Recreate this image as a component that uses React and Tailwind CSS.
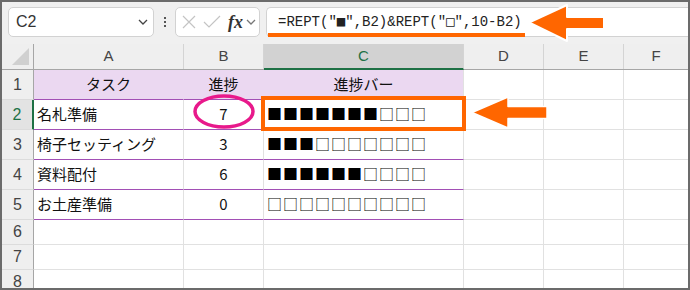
import React from "react";

const JP = { fontFamily: '"Noto Sans CJK JP", "Noto Sans", sans-serif' };
const SQ = { fontFamily: '"DejaVu Sans Mono", monospace' };

function Chevron({ className = "", color = "#444" }) {
  return (
    <svg width="10" height="6" viewBox="0 0 10 6" className={className}>
      <path d="M1 1 L5 5 L9 1" fill="none" stroke={color} strokeWidth="1.3" />
    </svg>
  );
}

const rows = [
  { n: 1, a: "タスク", b: "進捗", c: "進捗バー", head: true },
  { n: 2, a: "名札準備", b: "7", v: 7 },
  { n: 3, a: "椅子セッティング", b: "3", v: 3 },
  { n: 4, a: "資料配付", b: "6", v: 6 },
  { n: 5, a: "お土産準備", b: "0", v: 0 },
];

const cols = [
  { l: "A", w: "w-[150px]" },
  { l: "B", w: "w-[80px]" },
  { l: "C", w: "w-[200px]" },
  { l: "D", w: "w-[80px]" },
  { l: "E", w: "w-[80px]" },
];

export default function App() {
  return (
    <div
      className="relative w-[690px] h-[290px] overflow-hidden border-2 border-[#6b6b6b] bg-white"
      style={{ fontFamily: '"Liberation Sans", Arial, sans-serif' }}
    >
      {/* toolbar */}
      <div className="h-[42px] bg-[#f0f0f0] flex items-start pt-[5px] pl-[6px]">
        <div className="w-[146px] h-[30px] bg-white border border-[#d2d2d2] rounded-[5px] flex items-center justify-between pl-[7px] pr-[5px]">
          <span className="text-[16px] text-[#333]">C2</span>
          <Chevron />
        </div>
        <div className="w-[21px] h-[30px] flex flex-col items-center justify-center gap-[2px]">
          <span className="w-[2px] h-[2px] bg-[#555]" />
          <span className="w-[2px] h-[2px] bg-[#555]" />
          <span className="w-[2px] h-[2px] bg-[#555]" />
        </div>
        <div className="w-[85px] h-[30px] bg-white border border-[#d2d2d2] rounded-[5px] flex items-center pl-[6px]">
          <svg width="14" height="14" viewBox="0 0 14 14">
            <path d="M1 1 L13 13 M13 1 L1 13" stroke="#c4c4c4" strokeWidth="1.2" />
          </svg>
          <svg width="18" height="14" viewBox="0 0 18 14" className="ml-[7px]">
            <path d="M1 7 L6 12 L17 1" fill="none" stroke="#c4c4c4" strokeWidth="1.2" />
          </svg>
          <span
            className="ml-[7px] text-[18px] italic font-bold text-[#333] leading-none"
            style={{ fontFamily: '"Liberation Serif", "Times New Roman", serif' }}
          >
            fx
          </span>
          <Chevron className="ml-[3px]" color="#777" />
        </div>
        <div className="ml-[6px] flex-1 h-[30px] bg-white border border-r-0 border-[#d2d2d2] rounded-l-[5px] flex items-center pl-[11px]">
          <span
            className="text-[14px] text-[#222]"
            style={{ fontFamily: '"Liberation Mono", "DejaVu Sans Mono", monospace' }}
          >
            =REPT("<span style={SQ}>■</span>",B2)&amp;REPT("<span style={SQ}>□</span>",10-B2)
          </span>
        </div>
      </div>

      {/* column header */}
      <div className="flex h-[26px] border-b border-[#a6a6a6] bg-[#efefef] text-[15px] text-[#444]">
        <div className="w-[32px] border-r border-[#a6a6a6] relative">
          <svg width="20" height="18" viewBox="0 0 20 18" className="absolute left-[9px] top-[4px]">
            <polygon points="18,0 18,17 1,17" fill="#d0d0d0" />
          </svg>
        </div>
        {cols.map((c) => (
          <div
            key={c.l}
            className={`${c.w} flex items-center justify-center border-r border-[#d4d4d4] ${
              c.l === "C" ? "bg-[#d2d2d2] text-[#1e7145] border-b-2 border-b-[#1e7145] -mb-[1px]" : ""
            }`}
          >
            {c.l}
          </div>
        ))}
        <div className="flex-1 flex items-center justify-center">F</div>
      </div>

      {/* data rows */}
      {rows.map((r) => (
        <div key={r.n} className="flex h-[30px]">
          <div
            className={`w-[32px] flex items-center justify-center text-[16px] border-b border-[#dcdcdc] ${
              r.n === 2
                ? "bg-[#e3e3e3] text-[#1e7145] border-r-2 border-r-[#1e7145]"
                : "bg-[#efefef] text-[#444] border-r border-r-[#a6a6a6]"
            }`}
          >
            {r.n}
          </div>
          <div
            className={`w-[150px] flex items-center text-[15px] text-[#111] border-b border-b-[#a24fb5] ${
              r.head ? "justify-center bg-[#ebd8f1] border-r border-r-[#ebd8f1]" : "pl-[3px] border-r border-r-[#e1e1e1]"
            }`}
            style={JP}
          >
            {r.a}
          </div>
          <div
            className={`w-[80px] flex items-center justify-center text-[15px] text-[#111] border-b border-b-[#a24fb5] ${
              r.head ? "bg-[#ebd8f1] border-r border-r-[#ebd8f1]" : "border-r border-r-[#e1e1e1]"
            }`}
            style={JP}
          >
            {r.b}
          </div>
          <div
            className={`w-[200px] flex items-center text-[15px] text-[#000] border-b border-b-[#a24fb5] border-r border-r-[#e1e1e1] ${
              r.head ? "justify-center bg-[#ebd8f1] text-[#111]" : "pl-[3px] tracking-[1px]"
            }`}
            style={JP}
          >
            {r.head ? r.c : "■".repeat(r.v) + "□".repeat(10 - r.v)}
          </div>
          <div className="w-[80px] border-r border-b border-[#e1e1e1]" />
          <div className="w-[80px] border-r border-b border-[#e1e1e1]" />
          <div className="flex-1 border-b border-[#e1e1e1]" />
        </div>
      ))}
      {[6, 7, 8].map((n) => (
        <div key={n} className="flex h-[25px]">
          <div className="w-[32px] flex items-start justify-center pt-[4px] leading-none text-[16px] text-[#444] bg-[#efefef] border-r border-r-[#a6a6a6] border-b border-b-[#dcdcdc]">
            {n}
          </div>
          <div className="w-[150px] border-r border-b border-[#e1e1e1]" />
          <div className="w-[80px] border-r border-b border-[#e1e1e1]" />
          <div className="w-[200px] border-r border-b border-[#e1e1e1]" />
          <div className="w-[80px] border-r border-b border-[#e1e1e1]" />
          <div className="w-[80px] border-r border-b border-[#e1e1e1]" />
          <div className="flex-1 border-b border-[#e1e1e1]" />
        </div>
      ))}

      {/* annotations */}
      <svg
        className="absolute left-[-2px] top-[-2px] pointer-events-none"
        width="690"
        height="290"
        viewBox="0 0 690 290"
      >
        <rect x="268" y="33" width="257" height="4" fill="#ff6600" />
        <polygon
          points="529,22.5 567,5 567,17 604,17 604,29 567,29 567,41"
          fill="#ff6600"
          stroke="#ffffff"
          strokeWidth="2"
          strokeLinejoin="round"
        />
        <rect x="263" y="98" width="201" height="31" fill="none" stroke="#ff6600" strokeWidth="4" />
        <polygon
          points="472,112.5 508,97 508,106.5 547,106.5 547,118.5 508,118.5 508,128"
          fill="#ff6600"
          stroke="#ffffff"
          strokeWidth="1.5"
          strokeLinejoin="round"
        />
        <ellipse cx="224" cy="111.5" rx="29" ry="15.5" fill="none" stroke="#e8198b" strokeWidth="3.5" />
      </svg>
    </div>
  );
}
